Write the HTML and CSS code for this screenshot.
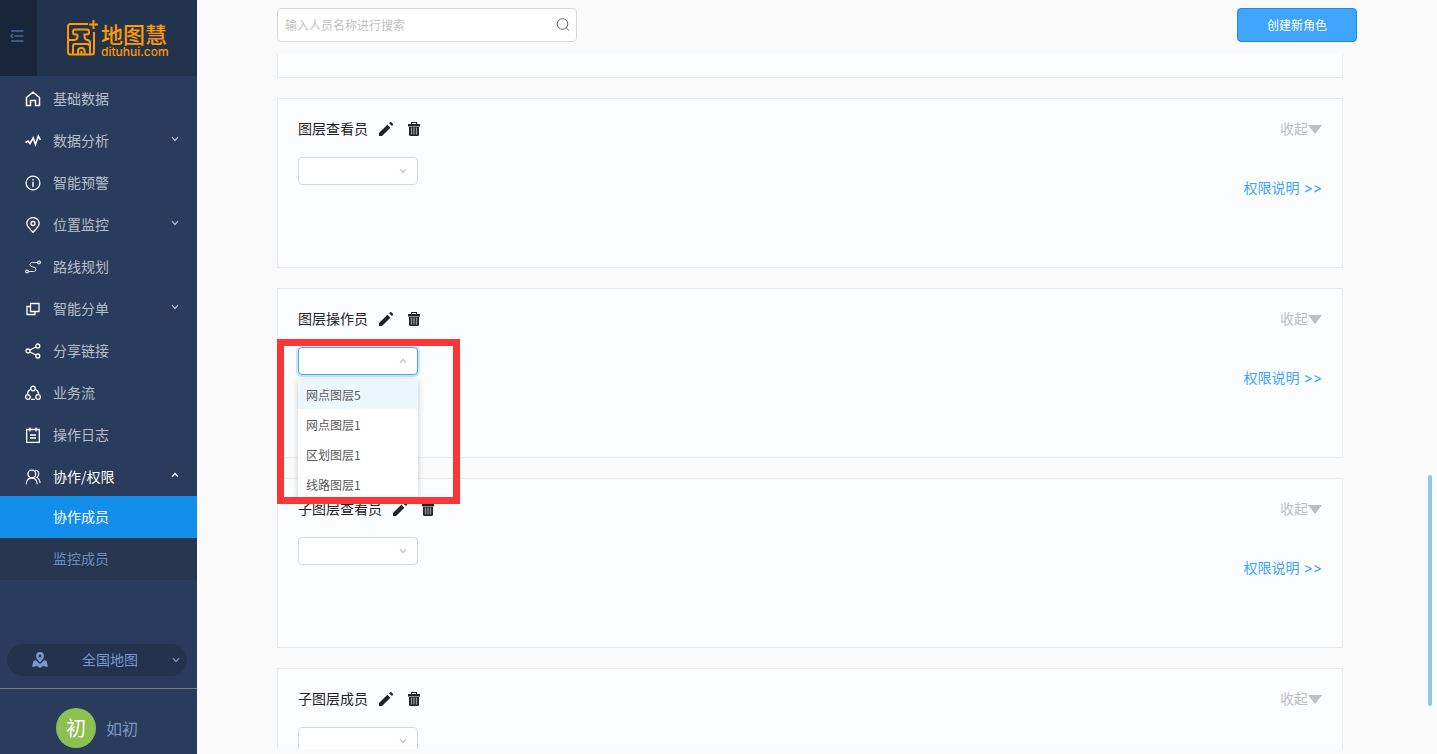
FILE: index.html
```html
<!DOCTYPE html>
<html lang="zh-CN">
<head>
    <meta charset="UTF-8">
    <meta name="viewport" content="width=device-width, initial-scale=1.0">
    <title>地图慧</title>
    <link rel="stylesheet" href="styles.css">
</head>
<body>
    <!-- Shared icons -->
    <svg class="sprite" aria-hidden="true">
        <symbol id="down" viewBox="0 0 8 8"><path d="M1 2.2l3 3.3 3-3.3" fill="none" stroke="currentColor" stroke-width="1.2"/></symbol>
        <symbol id="up" viewBox="0 0 8 8"><path d="M1 5.8l3-3.3 3 3.3" fill="none" stroke="currentColor" stroke-width="1.2"/></symbol>
        <symbol id="pencil" viewBox="0 0 16 16"><path d="M1 15v-3L9.4 3.700l3 3L4 15zM11 2.300l1.100-1.100q.6-.5 1.200 0l1.600 1.600q.5.600 0 1.200l-.9 1z" fill="currentColor"/></symbol>
        <symbol id="trash" viewBox="0 0 14 16"><path d="M1 3h12v2.500H1zM4 3V1h6v2H9V2H5v1z" fill="currentColor"/><path d="M2 6h10V13.500q0 1.500-1.500 1.500h-7Q2 15 2 13.500z" fill="currentColor"/><path d="M4.500 6.500v7M7 6.500v7M9.500 6.500v7" stroke="#999" stroke-width="1.300"/></symbol>
    </svg>

    <div class="layout">
        <aside class="sidebar">
            <div class="brand">
                <button class="collapse" aria-label="收起菜单">
                    <svg width="14" height="12" viewBox="0 0 14 12" fill="none" stroke="currentColor" stroke-width="1.500"><path d="M1 1h12.500M4.500 6h9M1 11h12.500M3 4L1 6l2 2"/></svg>
                </button>
                <a href="#" class="logo">
                    <svg width="32" height="36" viewBox="0 0 32 36" fill="none" stroke="currentColor" stroke-width="2">
                        <path d="M22 4H4.500Q2 4 2 6.500v25.500q0 2.500 2.500 2.500h21q2.500 0 2.500-2.500V12"/>
                        <path d="M27.500 0v9M23 4.500h9"/>
                        <path d="M11.500 14.500H9Q7 14.500 7 12.500v-1Q7 9.500 9 9.500h12q2 0 2 2v1q0 2-2 2h-2.500v2q0 3 3 3.500 2.500.5 2.500 3v11.500M11.500 14.500v2q0 3-3 3.500H2M7 34.500V26q0-2 2-2h12q2 0 2 2M12 34.500v-3.500q0-3 3.300-3t3.300 3v3.500M15.300 31v3.500"/>
                    </svg>
                    <span class="logo-text">
                        <strong>地图慧</strong>
                        <small>dituhui.com</small>
                    </span>
                </a>
            </div>

            <nav class="menu">
                <a href="#" class="menu-item">
                    <svg class="menu-icon" viewBox="0 0 16 16"><path d="M1.500 6.500L8 1.200l6.500 5.300v8h-4V9.500h-5v5h-4z" stroke-width="1.500"/></svg>
                    <span>基础数据</span>
                </a>
                <a href="#" class="menu-item">
                    <svg class="menu-icon" viewBox="0 0 16 16"><path d="M.5 9.500l2.500-1.500 2 2.500 3.200-5.500 2.300 6.500 2.800-8.500 2 4" stroke-width="1.600"/></svg>
                    <span>数据分析</span>
                    <svg class="arrow"><use href="#down"/></svg>
                </a>
                <a href="#" class="menu-item">
                    <svg class="menu-icon" viewBox="0 0 16 16"><circle cx="8" cy="8" r="6.900"/><path d="M8 4v1.500M8 6.800V12" stroke-width="1.400"/></svg>
                    <span>智能预警</span>
                </a>
                <a href="#" class="menu-item">
                    <svg class="menu-icon" viewBox="0 0 16 16"><path d="M8 15.400C4 11 1.800 9 1.800 6.500a6.200 6 0 0 1 12.400 0C14.200 9 12 11 8 15.400z"/><circle cx="8" cy="6.500" r="2"/></svg>
                    <span>位置监控</span>
                    <svg class="arrow"><use href="#down"/></svg>
                </a>
                <a href="#" class="menu-item">
                    <svg class="menu-icon" viewBox="0 0 16 16" stroke-opacity=".85"><circle cx="2" cy="12.500" r="1.400"/><circle cx="14" cy="3.500" r="1.400"/><path d="M12.200 3.500H7.500Q5 3.500 5 5.600t2.500 2.200q3.500.2 3.500 2.400t-2.500 2.300H4" stroke-width="1"/></svg>
                    <span>路线规划</span>
                </a>
                <a href="#" class="menu-item">
                    <svg class="menu-icon" viewBox="0 0 16 16"><path d="M5.500 2.500h8.500v8H5.500zM5.500 5.500h-3.500v8h8v-3"/></svg>
                    <span>智能分单</span>
                    <svg class="arrow"><use href="#down"/></svg>
                </a>
                <a href="#" class="menu-item">
                    <svg class="menu-icon" viewBox="0 0 16 16"><circle cx="3" cy="8" r="2"/><circle cx="12.800" cy="3" r="2"/><circle cx="12.800" cy="13" r="2"/><path d="M4.800 7L11 4M4.800 9l6.200 3"/></svg>
                    <span>分享链接</span>
                </a>
                <a href="#" class="menu-item">
                    <svg class="menu-icon" viewBox="0 0 16 16"><circle cx="8" cy="3.500" r="2.300"/><circle cx="2.900" cy="12" r="2.300"/><circle cx="13.100" cy="12" r="2.300"/><path d="M5.300 4.500Q2.500 6 2.500 9M10.700 4.500Q13.500 6 13.500 9M6 14.300h4"/></svg>
                    <span>业务流</span>
                </a>
                <a href="#" class="menu-item">
                    <svg class="menu-icon" viewBox="0 0 16 16"><path d="M1.700 2.500h12.600v12.800H1.700zM5 .5v4M11 .5v4M5 8h6M5 11h6"/></svg>
                    <span>操作日志</span>
                </a>
                <a href="#" class="menu-item open">
                    <svg class="menu-icon" viewBox="0 0 16 16"><circle cx="6.800" cy="5" r="3.900"/><path d="M1.200 15.300q.3-6 5.600-6.400 5.200.4 5.500 6.400M10 1.300q3.600 0 3.800 3.700-.1 2.400-2 3.500 3 1.300 3.300 5.500" stroke-width="1.100"/></svg>
                    <span>协作/权限</span>
                    <svg class="arrow"><use href="#up"/></svg>
                </a>
                <div class="submenu">
                    <a href="#" class="active">协作成员</a>
                    <a href="#">监控成员</a>
                </div>
            </nav>

            <div class="sidebar-bottom">
                <button class="map-switch">
                    <svg width="16" height="16" viewBox="0 0 16 16" fill="currentColor"><path fill-rule="evenodd" d="M8 0a4 4 0 0 1 4 4c0 2-1.800 4-4 6.500C5.800 8 4 6 4 4a4 4 0 0 1 4-4zm0 2.500a1.500 1.500 0 1 0 0 3 1.500 1.500 0 0 0 0-3z"/><path d="M3.500 8L8 12l4.500-4 2 1L16 15l-5-1-3 2-3-2-5 1 1.500-6z"/></svg>
                    <span>全国地图</span>
                    <svg class="arrow"><use href="#down"/></svg>
                </button>
                <a href="#" class="user">
                    <span class="avatar">初</span>
                    <span>如初</span>
                </a>
            </div>
        </aside>

        <main class="main">
            <div class="toolbar">
                <label class="search">
                    <input type="text" placeholder="输入人员名称进行搜索" aria-label="搜索人员">
                    <svg width="14" height="14" viewBox="0 0 14 14" fill="none" stroke="currentColor"><circle cx="6.500" cy="6" r="5.300"/><path d="M10.200 9.800l2.800 2.800"/></svg>
                </label>
                <button class="create">创建新角色</button>
            </div>

            <div class="role-list">
                <section class="role-tail"></section>

                <section class="role">
                    <div class="role-head">
                        <h2>图层查看员</h2>
                        <button aria-label="编辑"><svg class="tool"><use href="#pencil"/></svg></button>
                        <button aria-label="删除"><svg class="tool"><use href="#trash"/></svg></button>
                        <button class="fold"><span>收起</span><i></i></button>
                    </div>
                    <div class="select">
                        <select aria-label="图层查看员图层"><option></option></select>
                        <svg class="arrow"><use href="#down"/></svg>
                    </div>
                    <a href="#" class="explain">权限说明 &gt;&gt;</a>
                </section>

                <section class="role">
                    <div class="role-head">
                        <h2>图层操作员</h2>
                        <button aria-label="编辑"><svg class="tool"><use href="#pencil"/></svg></button>
                        <button aria-label="删除"><svg class="tool"><use href="#trash"/></svg></button>
                        <button class="fold"><span>收起</span><i></i></button>
                    </div>
                    <div class="select opened">
                        <select aria-label="图层操作员图层"><option></option></select>
                        <svg class="arrow"><use href="#up"/></svg>
                        <ul class="options">
                            <li class="hover">网点图层5</li>
                            <li>网点图层1</li>
                            <li>区划图层1</li>
                            <li>线路图层1</li>
                        </ul>
                        <div class="highlight"></div>
                    </div>
                    <a href="#" class="explain">权限说明 &gt;&gt;</a>
                </section>

                <section class="role">
                    <div class="role-head">
                        <h2>子图层查看员</h2>
                        <button aria-label="编辑"><svg class="tool"><use href="#pencil"/></svg></button>
                        <button aria-label="删除"><svg class="tool"><use href="#trash"/></svg></button>
                        <button class="fold"><span>收起</span><i></i></button>
                    </div>
                    <div class="select">
                        <select aria-label="子图层查看员图层"><option></option></select>
                        <svg class="arrow"><use href="#down"/></svg>
                    </div>
                    <a href="#" class="explain">权限说明 &gt;&gt;</a>
                </section>

                <section class="role">
                    <div class="role-head">
                        <h2>子图层成员</h2>
                        <button aria-label="编辑"><svg class="tool"><use href="#pencil"/></svg></button>
                        <button aria-label="删除"><svg class="tool"><use href="#trash"/></svg></button>
                        <button class="fold"><span>收起</span><i></i></button>
                    </div>
                    <div class="select">
                        <select aria-label="子图层成员图层"><option></option></select>
                        <svg class="arrow"><use href="#down"/></svg>
                    </div>
                </section>
            </div>
            <div class="scroll-thumb"></div>
        </main>
    </div>
</body>
</html>
```
FILE: styles.css
```css
* {
    box-sizing: border-box;
}

body {
    margin: 0;
    font-family: "Noto Sans CJK SC", sans-serif;
    font-size: 14px;
    line-height: 20px;
    background-color: #fafafa;
    color: #222;
}

a {
    text-decoration: none;
    color: inherit;
}

button {
    padding: 0;
    border: none;
    background: none;
    font: inherit;
    color: inherit;
    cursor: pointer;
}

svg {
    display: block;
    flex-shrink: 0;
}

.sprite {
    display: none;
}

.arrow {
    width: 8px;
    height: 8px;
}

.layout {
    display: flex;
    height: 100vh;
    overflow: hidden;
}

/* Sidebar */
.sidebar {
    display: flex;
    flex-direction: column;
    flex: 0 0 197px;
    background-color: #293c5b;
}

.brand {
    display: flex;
    height: 76px;
    background-color: #22334e;
}

.collapse {
    display: flex;
    align-items: center;
    justify-content: center;
    width: 37px;
    padding: 0 3px 4px 0;
    background-color: #19253a;
    color: #4a6796;
}

.logo {
    display: flex;
    align-items: center;
    gap: 3px;
    padding-left: 29px;
    color: #ff9900;
}

.logo-text {
    display: flex;
    flex-direction: column;
    padding-top: 2px;
}

.logo-text strong {
    font-size: 22px;
    line-height: 26px;
    font-weight: 500;
}

.logo-text small {
    font-family: Inter, sans-serif;
    font-size: 12px;
    line-height: 12px;
    font-weight: 500;
}

.menu {
    display: flex;
    flex-direction: column;
}

.menu-item {
    display: flex;
    align-items: center;
    height: 42px;
    padding: 4px 18px 0 25px;
    color: #b8bfca;
}

.menu-item span {
    flex: 1;
    margin-left: 12px;
    padding-bottom: 2px;
}

.menu-icon {
    width: 16px;
    height: 16px;
    fill: none;
    stroke: #fff;
    stroke-width: 1.3;
}

.menu-item .arrow {
    margin-bottom: 4px;
}

.menu-item.open {
    color: #fff;
}

.submenu {
    background-color: #26364f;
}

.submenu a {
    display: block;
    padding: 10px 0 12px 53px;
    color: #6f8cc0;
}

.submenu a.active {
    background-color: #108ee9;
    color: #fff;
}

.sidebar-bottom {
    margin-top: auto;
}

.map-switch {
    display: flex;
    align-items: center;
    justify-content: space-between;
    width: 180px;
    height: 32px;
    margin: 0 0 12px 7px;
    padding: 0 7px 0 25px;
    border-radius: 16px;
    background-color: #22334e;
    color: #7b98cc;
}

.map-switch span {
    padding-bottom: 2px;
}

.user {
    display: flex;
    align-items: center;
    justify-content: center;
    gap: 10px;
    height: 66px;
    padding: 12px 3px 0 0;
    border-top: 1px solid #7b7b7b;
    font-size: 16px;
    color: #7b98cc;
}

.avatar {
    width: 40px;
    height: 40px;
    border-radius: 50%;
    background-color: #8cc152;
    font-size: 20px;
    line-height: 40px;
    text-align: center;
    color: #fff;
}

/* Main area */
.main {
    position: relative;
    display: flex;
    flex-direction: column;
    flex: 1;
    min-width: 0;
    padding-bottom: 5px;
}

.toolbar {
    display: flex;
    justify-content: space-between;
    padding: 8px 80px 12px;
}

.search {
    display: flex;
    align-items: center;
    width: 300px;
    height: 34px;
    padding: 0 6px 0 7px;
    border: 1px solid #d9d9d9;
    border-radius: 4px;
    background-color: #fff;
    color: #666;
}

.search input {
    flex: 1;
    min-width: 0;
    padding: 0;
    border: none;
    outline: none;
    background: none;
    font: inherit;
    font-size: 12px;
}

.search input::placeholder {
    color: #bfbfbf;
}

.create {
    width: 120px;
    height: 34px;
    border: 1px solid #108ee9;
    border-radius: 4px;
    background-color: #40a5ff;
    font-size: 12px;
    color: #fff;
}

.role-list {
    display: flex;
    flex-direction: column;
    flex: 1;
    gap: 20px;
    min-height: 0;
    padding: 0 94px 0 80px;
    overflow: hidden;
}

.role,
.role-tail {
    flex-shrink: 0;
    border: 1px solid #ebebeb;
    background-color: #fbfcfe;
}

.role-tail {
    height: 24px;
    border-top: none;
}

.role {
    display: flex;
    flex-direction: column;
    height: 170px;
    padding: 19px 20px 20px;
}

.role-head {
    display: flex;
    align-items: center;
    margin-bottom: 17px;
}

.role-head h2 {
    margin: 0;
    padding-bottom: 2px;
    font-size: 14px;
    font-weight: 400;
}

.role-head button {
    margin-left: 10px;
}

.role-head button + button {
    margin-left: 12px;
}

.tool {
    width: 16px;
    height: 16px;
}

.role-head .fold {
    display: flex;
    align-items: center;
    margin-left: auto;
    color: #bfbfbf;
}

.fold span {
    padding-bottom: 2px;
}

.fold i {
    border: 7px solid transparent;
    border-top: 9px solid #bfbfbf;
    border-bottom: none;
}

.select {
    position: relative;
    display: flex;
    align-items: center;
    width: 120px;
}

.select select {
    width: 120px;
    height: 28px;
    padding: 0 8px;
    border: 1px solid #d9d9d9;
    border-radius: 4px;
    background-color: #fff;
    appearance: none;
}

.select .arrow {
    position: absolute;
    right: 11px;
    color: #bfbfbf;
    pointer-events: none;
}

.select.opened select {
    border-color: #49a9ee;
    box-shadow: 0 0 0 2px rgba(16, 142, 233, 0.2);
}

.options {
    position: absolute;
    z-index: 1;
    top: 32px;
    left: 0;
    width: 100%;
    margin: 0;
    padding: 0;
    border-radius: 4px;
    background-color: #fff;
    box-shadow: 0 1px 6px rgba(0, 0, 0, 0.2);
    list-style: none;
    font-size: 12px;
    color: #595959;
}

.options li {
    padding: 6px 8px 4px;
}

.options .hover {
    background-color: #ecf6fd;
}

/* Red frame around the opened select */
.highlight {
    position: absolute;
    z-index: 2;
    top: -8px;
    left: -21px;
    width: 183px;
    height: 165px;
    border: 7px solid #fc3636;
    pointer-events: none;
}

.explain {
    align-self: flex-end;
    margin-top: -7px;
    font-family: Inter, "Noto Sans CJK SC", sans-serif;
    color: #40a5ff;
}

.scroll-thumb {
    position: absolute;
    right: 5px;
    bottom: 48px;
    width: 4px;
    height: 231px;
    border-radius: 2px;
    background-color: #8ecbe1;
}
```
